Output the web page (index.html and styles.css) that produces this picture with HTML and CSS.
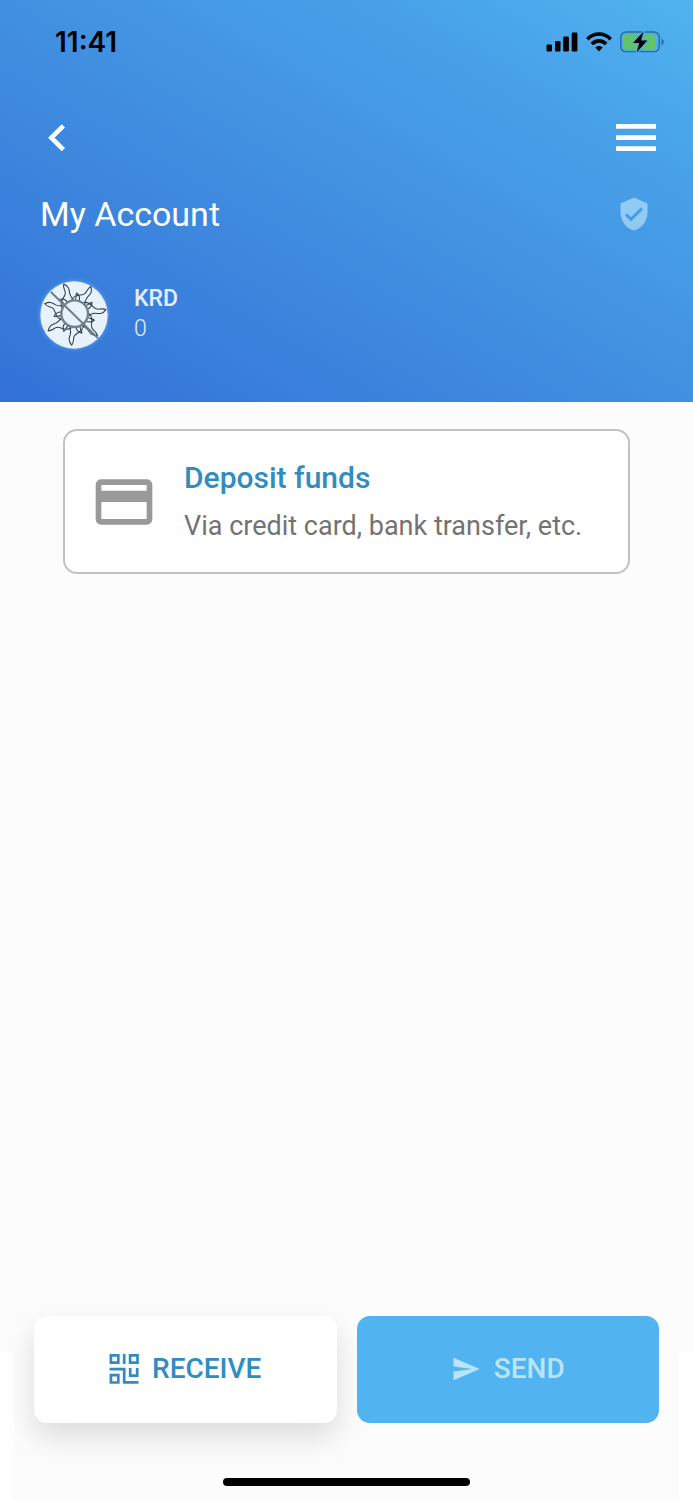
FILE: index.html
```html
<!DOCTYPE html>
<html lang="en">
<head>
<meta charset="utf-8">
<meta name="viewport" content="width=device-width, initial-scale=1">
<title>My Account</title>
<link rel="stylesheet" href="styles.css">
</head>
<body>
<div class="app">
  <header class="header">
    <div class="status">
      <time class="clock">11:41</time>
      <div class="indicators">
        <svg width="32" height="20" viewBox="0 0 32 20" fill="#000" aria-hidden="true">
          <rect x="0.5" y="12.5" width="5.500" height="7" rx="1.2"/><rect x="9" y="9" width="5.500" height="10.500" rx="1.200"/><rect x="17.200" y="4.500" width="5.700" height="15" rx="1.200"/><rect x="25.700" y="0.500" width="5.700" height="19" rx="1.200"/>
        </svg>
        <svg width="26" height="20" viewBox="0 0 26 20" fill="none" stroke="#000" stroke-width="3.600" aria-hidden="true">
          <path d="M1.300 7.200C7.800.3 18.200.3 24.700 7.200"/><path d="M5.800 12C10 7.800 16 7.800 20.200 12"/><path d="M9.300 15.600C11.400 13.500 14.600 13.500 16.700 15.600L13 19.500Z" fill="#000" stroke="none"/>
        </svg>
        <svg width="44" height="22" viewBox="0 0 44 22" aria-hidden="true">
          <rect x=".8" y="1" width="38.400" height="19.600" rx="5" fill="none" stroke="#2a6d9b" stroke-width="1.400"/>
          <path d="M41.500 7.500C44.500 9 44.500 13 41.500 14.500Z" fill="#2a6d9b"/>
          <rect x="3.200" y="3.500" width="32.500" height="14.800" rx="3" fill="#63c466"/>
          <path d="M23.600.6 13 12h6.200L16.600 21.400 27.300 9.600h-6.200Z" fill="#000" stroke="#4eadeb" stroke-width="2.400" paint-order="stroke" stroke-linejoin="round"/>
        </svg>
      </div>
    </div>
    <nav class="nav">
      <button class="icon-button" type="button" aria-label="Back">
        <svg width="18" height="28" viewBox="0 0 18 28" fill="none" stroke="#fff" stroke-width="4.600"><path d="M15.400 1.800 3.300 13.700 15.400 25.600"/></svg>
      </button>
      <button class="icon-button" type="button" aria-label="Menu">
        <svg width="40" height="28" viewBox="0 0 40 28" fill="#fff"><path d="M0 0h40v4.700H0ZM0 11.200h40v4.700H0ZM0 22.300h40V27H0Z"/></svg>
      </button>
    </nav>
    <div class="title-row">
      <h1 class="title">My Account</h1>
      <svg class="shield" width="36" height="36" viewBox="0 0 24 24" aria-hidden="true"><path fill="#dcf8ff" d="M12 1 3 5v6c0 5.550 3.840 10.740 9 12 5.160-1.260 9-6.450 9-12V5l-9-4Zm-2 16-4-4 1.410-1.410L10 14.170l6.590-6.590L18 9l-8 8Z"/></svg>
    </div>
    <div class="balance">
      <svg class="avatar" width="70" height="70" viewBox="-107 -101 210 210" aria-hidden="true">
        <defs>
          <path id="ray" d="M-39-19C-48-45-22-50-29-67-31-73-35-80-33-89-15-80-17-73-15-61-13-51-8-48-2-39M1-42C8-48 1-54 6-62 13-56 17-50 14-39"/>
        </defs>
        <circle cx="-2" cy="4" r="101" fill="#e8f2fc"/>
        <g fill="none" stroke="#34414c" stroke-width="3.200" stroke-linejoin="round">
          <use href="#ray"/><use href="#ray" transform="rotate(51.430)"/><use href="#ray" transform="rotate(102.860)"/><use href="#ray" transform="rotate(154.290)"/><use href="#ray" transform="rotate(205.710)"/><use href="#ray" transform="rotate(257.140)"/><use href="#ray" transform="rotate(308.570)"/>
        </g>
        <circle r="40" fill="none" stroke="#70808d" stroke-width="7"/>
        <path d="M-72-66 70 74" stroke="#727e87" stroke-width="6"/>
      </svg>
      <div class="asset">
        <strong class="asset-name">KRD</strong>
        <span class="asset-amount">0</span>
      </div>
    </div>
  </header>

  <main class="content">
    <button class="deposit" type="button">
      <svg class="card-icon" width="68" height="68" viewBox="0 0 24 24" aria-hidden="true"><path fill="#999" d="M20 4H4c-1.110 0-1.990.89-1.990 2L2 18c0 1.110.89 2 2 2h16c1.110 0 2-.89 2-2V6c0-1.110-.89-2-2-2Zm0 14H4v-6h16v6Zm0-10H4V6h16v2Z"/></svg>
      <span class="deposit-text">
        <span class="deposit-title">Deposit funds</span>
        <span class="deposit-note">Via credit card, bank transfer, etc.</span>
      </span>
    </button>
  </main>

  <footer class="footer">
    <div class="footer-panel">
      <div class="actions">
        <button class="action receive" type="button">
          <svg width="30" height="30" viewBox="0 0 29 30" fill="none" stroke="#318dbf" stroke-width="2.700" aria-hidden="true"><path d="M1.400 1.400h7.400v7.300H1.400ZM20.600 1.400H28v7.300h-7.400ZM1.400 21.200h7.400v7.300H1.400ZM14.700 0v10M0 15.200h14.700v13.200H29M20.700 14v7.600h7V14"/></svg>
          RECEIVE
        </button>
        <button class="action send" type="button" disabled>
          <svg width="30" height="30" viewBox="0 0 24 24" fill="#b9e4fb" aria-hidden="true"><path d="M2.010 21 23 12 2.010 3 2 10l15 2-15 2Z"/></svg>
          SEND
        </button>
      </div>
      <div class="home-bar"></div>
    </div>
  </footer>
</div>
</body>
</html>
```
FILE: styles.css
```css
* { box-sizing: border-box; }
body { margin: 0; background: #fcfcfc; font-family: Roboto, sans-serif; }
button { border: 0; padding: 0; background: none; font: inherit; color: inherit; }
svg { display: block; flex: none; }
.app { min-height: 100vh; display: flex; flex-direction: column; }

.header {
  padding: 26px 37px 52px 40px;
  color: #fff;
  background: linear-gradient(to top right, #3371d7 0%, #4190e1 50%, #49a3e9 80%, #50b4ef 100%);
}
.status { display: flex; align-items: center; justify-content: space-between; height: 32px; margin-right: -8px; padding-left: 15px; }
.clock { font: 600 28px/32px Inter, sans-serif; color: #000; }
.indicators { display: flex; align-items: center; gap: 8px; }
.nav { display: flex; align-items: center; justify-content: space-between; height: 28px; margin-top: 66px; padding-left: 8px; }
.title-row { display: flex; align-items: center; justify-content: space-between; height: 40px; margin-top: 42px; padding-right: 4px; }
.title { margin: 0; font-size: 34px; line-height: 40px; font-weight: 400; }
.shield { opacity: .5; }
.balance { display: flex; align-items: center; gap: 25px; margin-top: 46px; margin-left: -1px; }
.avatar { border-radius: 50%; filter: drop-shadow(0 0 2px rgba(120, 200, 255, .7)); }
.asset { display: flex; flex-direction: column; padding-bottom: 3px; color: #e3effb; font-size: 23px; line-height: 30px; }
.asset-name { font-weight: 500; }
.asset-amount { font-weight: 300; }

.content { flex: 1; padding: 27px 63px; }
.deposit {
  display: flex; align-items: center; gap: 26px;
  width: 100%; min-height: 145px; padding: 20px 25px;
  border: 2px solid #c2c2c2; border-radius: 14px; background: #fff; text-align: left;
}
.deposit-text { display: flex; flex-direction: column; gap: 12px; }
.deposit-title { color: #328cbe; font-size: 30px; line-height: 36px; font-weight: 500; }
.deposit-note { color: #737373; font-size: 27px; line-height: 36px; }

.footer { padding: 0 14px; background: linear-gradient(#fcfcfc 37px, #fff 37px); }
.footer-panel { padding: 0 20px 14px; background: #fcfcfc; }
.actions { display: grid; grid-template-columns: 1fr 1fr; gap: 20px; }
.action {
  display: flex; align-items: center; justify-content: center; gap: 13px;
  height: 107px; padding-bottom: 2px; border-radius: 13px; font-size: 28px; line-height: 32px; font-weight: 500;
}
.receive { background: #fff; color: #318dbf; box-shadow: 0 14px 30px rgba(0, 0, 0, .13); }
.send { background: #51b3f0; color: #b9e4fb; }
.home-bar { width: 247px; height: 8px; margin: 55px auto 0; border-radius: 4px; background: #000; }
```
